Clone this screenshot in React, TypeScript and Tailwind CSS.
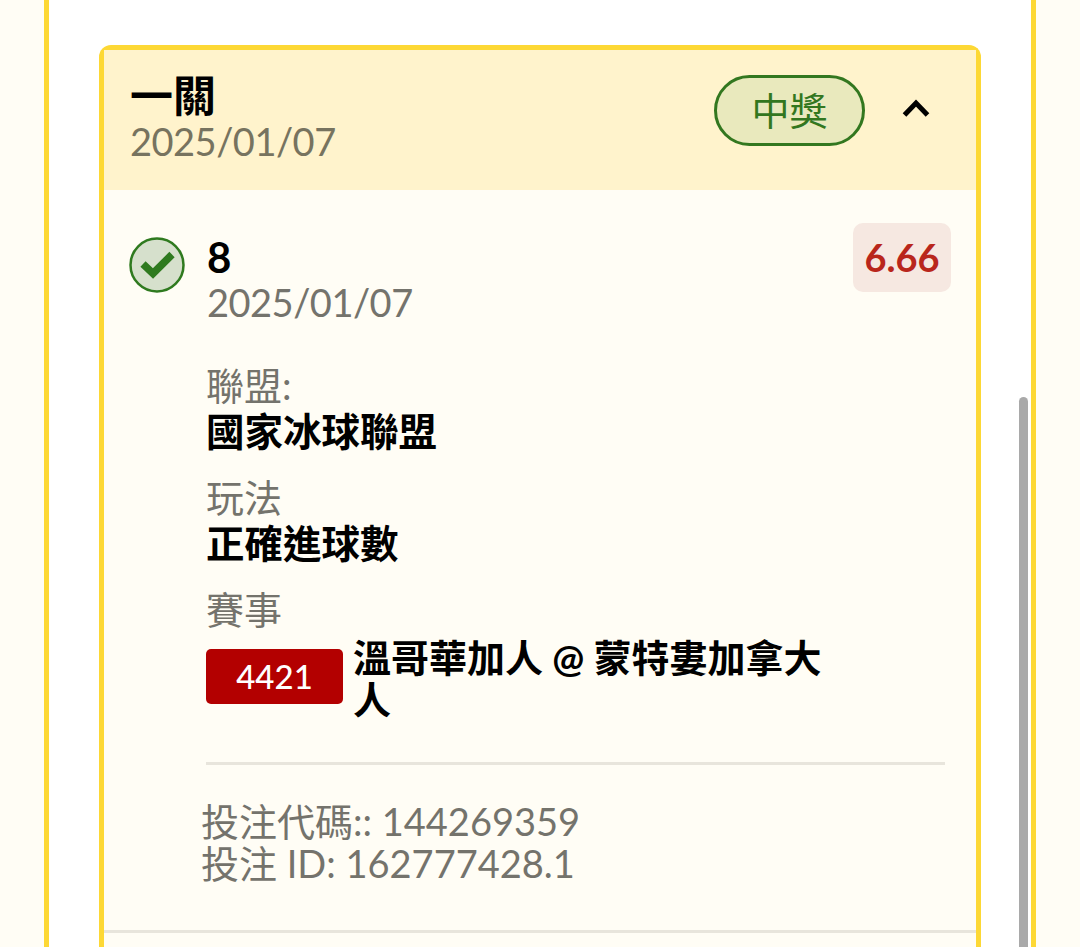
const cjk = { fontFamily: '"Lato", "Noto Sans CJK TC", sans-serif' };

function CheckBadge() {
  return (
    <svg viewBox="0 0 56 56" className="h-[56px] w-[56px] shrink-0">
      <circle cx="28" cy="28" r="26.5" fill="#d6e0cc" stroke="#2f7a1f" strokeWidth="2.5" />
      <path d="M14 27 L24 36.5 L43 17.5" fill="none" stroke="#2f7a1f" strokeWidth="7.5" strokeLinejoin="miter" />
    </svg>
  );
}

function Field({ label, value }: { label: string; value: string }) {
  return (
    <div className="mb-[20px]">
      <div className="text-[38px] leading-[46px] text-[#74736c]">{label}</div>
      <div className="text-[38.5px] leading-[46px] font-bold text-black">{value}</div>
    </div>
  );
}

export default function App() {
  return (
    <div className="h-[947px] overflow-hidden bg-[#fffdf5] px-[44px]" style={cjk}>
      <div className="relative h-full border-x-[5px] border-[#fdd835] bg-white px-[50px] pt-[45px]">
        <div className="h-[1000px] rounded-t-[12px] border-[5px] border-b-0 border-[#fdd835] bg-[#fffdf5]">
          <div className="flex h-[140px] items-start justify-between bg-[#fff3cc] pr-[46px] pl-[26px]">
            <div className="pt-[23px]">
              <div className="text-[43px] leading-[46px] font-bold text-black">一關</div>
              <div className="text-[38px] leading-[44px] tracking-[-0.5px] text-[#77735f]">2025/01/07</div>
            </div>
            <div className="flex items-start gap-[37px] pt-[25px]">
              <div className="flex h-[71px] w-[151px] items-center justify-center rounded-full border-[3px] border-[#33771f] bg-[#e9e9bd] text-[38px] text-[#33771f]">
                中獎
              </div>
              <svg viewBox="0 0 28 20" className="mt-[23px] h-[20px] w-[28px]">
                <path d="M2.5 17 L14 5 L25.5 17" fill="none" stroke="#000" strokeWidth="5" />
              </svg>
            </div>
          </div>
          <div className="flex items-start justify-between px-[25px] pt-[33px]">
            <div className="flex items-start gap-[22px]">
              <div className="pt-[14px]">
                <CheckBadge />
              </div>
              <div className="pt-[12px]">
                <div className="text-[42px] leading-[45px] font-bold text-black">8</div>
                <div className="text-[38px] leading-[44px] tracking-[-0.5px] text-[#74736c]">2025/01/07</div>
              </div>
            </div>
            <div className="flex h-[69px] w-[98px] items-center justify-center rounded-[10px] bg-[#f6e8e1] text-[38px] font-bold text-[#b9261c]">
              6.66
            </div>
          </div>
          <div className="ml-[102px] pt-[38px]">
            <Field label="聯盟:" value="國家冰球聯盟" />
            <Field label="玩法" value="正確進球數" />
            <div className="text-[38px] leading-[46px] text-[#74736c]">賽事</div>
            <div className="flex items-start gap-[10px]">
              <div className="mt-[17px] flex h-[55px] w-[137px] shrink-0 items-center justify-center rounded-[5px] bg-[#b30000] text-[33px] font-medium text-white">
                4421
              </div>
              <div className="mt-[4px] w-[476px] text-[38px] leading-[42px] font-bold text-black">
                溫哥華加人 @ 蒙特婁加拿大人
              </div>
            </div>
          </div>
          <div className="mt-[42px] mr-[31px] ml-[102px] h-[3px] bg-[#e8e5dc]" />
          <div className="ml-[97px] pt-[35px] text-[38px] leading-[42px] text-[#74736c]">
            <div>投注代碼:: 144269359</div>
            <div>投注 ID: 162777428.1</div>
          </div>
          <div className="mt-[46px] h-[3px] bg-[#e8e5dc]" />
        </div>
        <div className="absolute top-[397px] right-[3px] h-[600px] w-[9px] rounded-full bg-[#a9a9a9]" />
      </div>
    </div>
  );
}
